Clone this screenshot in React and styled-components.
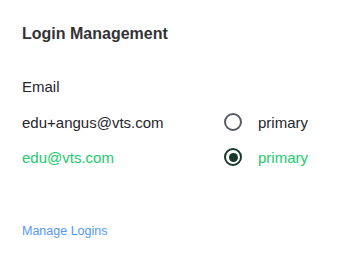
import React from "react";
import styled, { createGlobalStyle } from "styled-components";

const Global = createGlobalStyle`
  html, body { margin: 0; padding: 0; background: #fff; }
  body { font-family: "Liberation Sans", Arial, sans-serif; -webkit-font-smoothing: antialiased; }
`;

const Panel = styled.div`
  width: 350px;
  height: 257px;
  box-sizing: border-box;
  padding: 23px 22px 0 22px;
  display: flex;
  flex-direction: column;
`;

const Title = styled.h2`
  margin: 0;
  font-size: 16px;
  font-weight: 700;
  color: #333336;
  line-height: 22px;
`;

const Label = styled.div`
  margin-top: 31px;
  font-size: 15px;
  color: #26262c;
  line-height: 22px;
`;

const List = styled.div`
  margin-top: 13px;
  display: flex;
  flex-direction: column;
  gap: 13px;
`;

const Row = styled.div`
  display: grid;
  grid-template-columns: 202px 1fr;
  align-items: center;
  height: 22px;
  font-size: 15px;
  color: ${(p) => (p.$active ? "#20cb6c" : "#26262c")};
`;

const Choice = styled.label`
  display: flex;
  align-items: center;
  gap: 16px;
`;

const Radio = styled.span`
  width: 18px;
  height: 18px;
  box-sizing: border-box;
  border-radius: 50%;
  border: 2.5px solid ${(p) => (p.$checked ? "#173a2c" : "#5a5d64")};
  display: flex;
  align-items: center;
  justify-content: center;
  &::after {
    content: "";
    display: ${(p) => (p.$checked ? "block" : "none")};
    width: 9px;
    height: 9px;
    border-radius: 50%;
    background: #173a2c;
  }
`;

const Link = styled.a`
  margin-top: 54px;
  font-size: 12.5px;
  color: #5596f3;
  text-decoration: none;
  line-height: 18px;
`;

const logins = [
  { email: "edu+angus@vts.com", primary: false },
  { email: "edu@vts.com", primary: true },
];

export default function App() {
  return (
    <>
      <Global />
      <Panel>
        <Title>Login Management</Title>
        <Label>Email</Label>
        <List>
          {logins.map((l) => (
            <Row key={l.email} $active={l.primary}>
              <span>{l.email}</span>
              <Choice>
                <Radio $checked={l.primary} />
                <span>primary</span>
              </Choice>
            </Row>
          ))}
        </List>
        <Link href="#">Manage Logins</Link>
      </Panel>
    </>
  );
}
